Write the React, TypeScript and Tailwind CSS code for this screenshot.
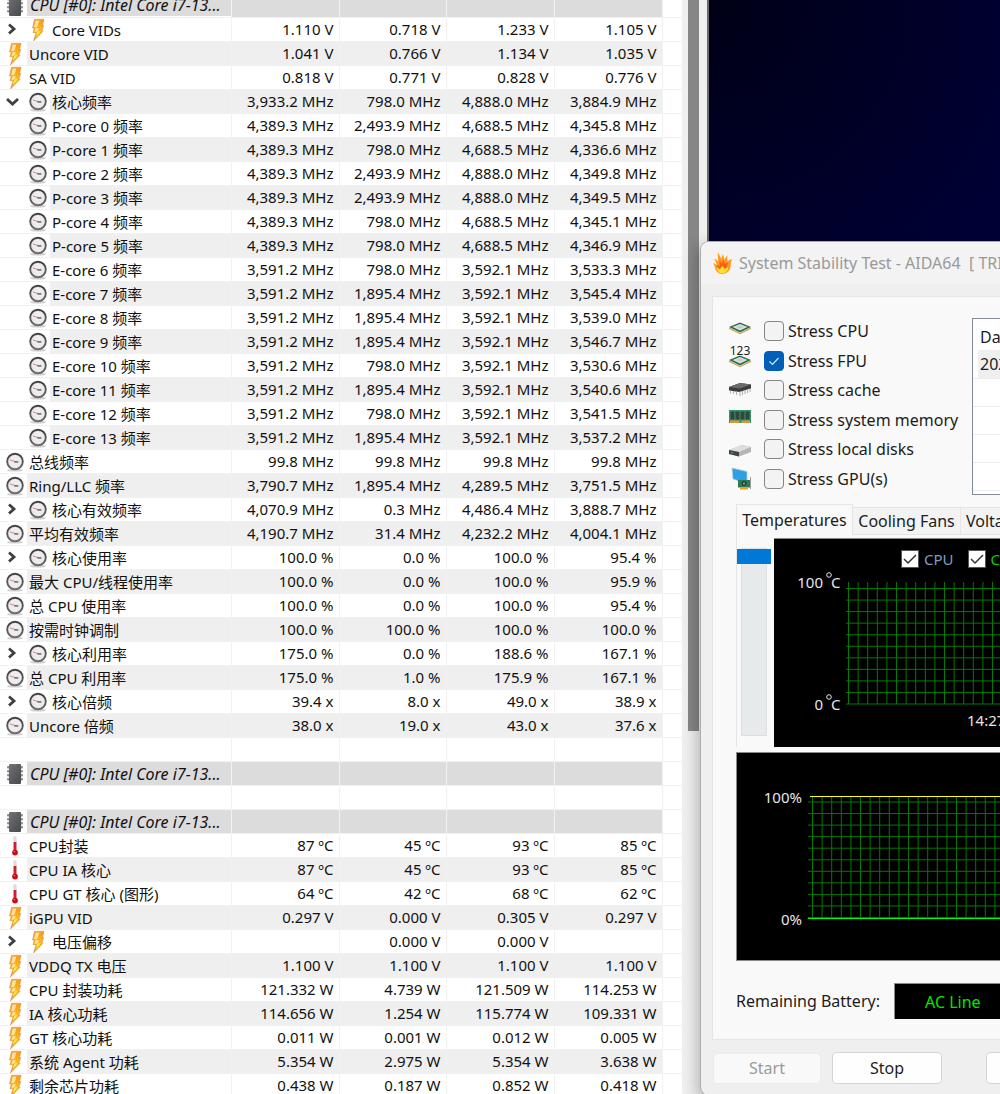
/**
 * Desktop with a hardware sensor list and a stability test window on top.
 * - SensorTable: tree-like list of readings (current / min / max / average)
 * - StabilityWindow: stress options, temperature chart and usage chart
 */

import { useState } from "react";

type IconKind = "chip" | "bolt" | "clock" | "temp";

interface SensorRow {
    label: string;
    icon?: IconKind;
    values?: string[];
    header?: boolean;
    child?: boolean;
    toggle?: "open" | "closed";
}

/* ── Sensor data ──────────────────────────────────────── */
const core = (label: string, values: string[]): SensorRow => ({
    label,
    icon: "clock",
    child: true,
    values: values.map((v) => `${v} MHz`),
});

const CPU_HEADER: SensorRow = { label: "CPU [#0]: Intel Core i7-13...", icon: "chip", header: true };

const ROWS: SensorRow[] = [
    CPU_HEADER,
    { label: "Core VIDs", icon: "bolt", child: true, toggle: "closed", values: ["1.110 V", "0.718 V", "1.233 V", "1.105 V"] },
    { label: "Uncore VID", icon: "bolt", values: ["1.041 V", "0.766 V", "1.134 V", "1.035 V"] },
    { label: "SA VID", icon: "bolt", values: ["0.818 V", "0.771 V", "0.828 V", "0.776 V"] },
    { ...core("核心频率", ["3,933.2", "798.0", "4,888.0", "3,884.9"]), toggle: "open" },
    core("P-core 0 频率", ["4,389.3", "2,493.9", "4,688.5", "4,345.8"]),
    core("P-core 1 频率", ["4,389.3", "798.0", "4,688.5", "4,336.6"]),
    core("P-core 2 频率", ["4,389.3", "2,493.9", "4,888.0", "4,349.8"]),
    core("P-core 3 频率", ["4,389.3", "2,493.9", "4,888.0", "4,349.5"]),
    core("P-core 4 频率", ["4,389.3", "798.0", "4,688.5", "4,345.1"]),
    core("P-core 5 频率", ["4,389.3", "798.0", "4,688.5", "4,346.9"]),
    core("E-core 6 频率", ["3,591.2", "798.0", "3,592.1", "3,533.3"]),
    core("E-core 7 频率", ["3,591.2", "1,895.4", "3,592.1", "3,545.4"]),
    core("E-core 8 频率", ["3,591.2", "1,895.4", "3,592.1", "3,539.0"]),
    core("E-core 9 频率", ["3,591.2", "1,895.4", "3,592.1", "3,546.7"]),
    core("E-core 10 频率", ["3,591.2", "798.0", "3,592.1", "3,530.6"]),
    core("E-core 11 频率", ["3,591.2", "1,895.4", "3,592.1", "3,540.6"]),
    core("E-core 12 频率", ["3,591.2", "798.0", "3,592.1", "3,541.5"]),
    core("E-core 13 频率", ["3,591.2", "1,895.4", "3,592.1", "3,537.2"]),
    { label: "总线频率", icon: "clock", values: ["99.8 MHz", "99.8 MHz", "99.8 MHz", "99.8 MHz"] },
    { label: "Ring/LLC 频率", icon: "clock", values: ["3,790.7 MHz", "1,895.4 MHz", "4,289.5 MHz", "3,751.5 MHz"] },
    { ...core("核心有效频率", ["4,070.9", "0.3", "4,486.4", "3,888.7"]), toggle: "closed" },
    { label: "平均有效频率", icon: "clock", values: ["4,190.7 MHz", "31.4 MHz", "4,232.2 MHz", "4,004.1 MHz"] },
    { label: "核心使用率", icon: "clock", child: true, toggle: "closed", values: ["100.0 %", "0.0 %", "100.0 %", "95.4 %"] },
    { label: "最大 CPU/线程使用率", icon: "clock", values: ["100.0 %", "0.0 %", "100.0 %", "95.9 %"] },
    { label: "总 CPU 使用率", icon: "clock", values: ["100.0 %", "0.0 %", "100.0 %", "95.4 %"] },
    { label: "按需时钟调制", icon: "clock", values: ["100.0 %", "100.0 %", "100.0 %", "100.0 %"] },
    { label: "核心利用率", icon: "clock", child: true, toggle: "closed", values: ["175.0 %", "0.0 %", "188.6 %", "167.1 %"] },
    { label: "总 CPU 利用率", icon: "clock", values: ["175.0 %", "1.0 %", "175.9 %", "167.1 %"] },
    { label: "核心倍频", icon: "clock", child: true, toggle: "closed", values: ["39.4 x", "8.0 x", "49.0 x", "38.9 x"] },
    { label: "Uncore 倍频", icon: "clock", values: ["38.0 x", "19.0 x", "43.0 x", "37.6 x"] },
    { label: "" },
    CPU_HEADER,
    { label: "" },
    CPU_HEADER,
    { label: "CPU封装", icon: "temp", values: ["87 ºC", "45 ºC", "93 ºC", "85 ºC"] },
    { label: "CPU IA 核心", icon: "temp", values: ["87 ºC", "45 ºC", "93 ºC", "85 ºC"] },
    { label: "CPU GT 核心 (图形)", icon: "temp", values: ["64 ºC", "42 ºC", "68 ºC", "62 ºC"] },
    { label: "iGPU VID", icon: "bolt", values: ["0.297 V", "0.000 V", "0.305 V", "0.297 V"] },
    { label: "电压偏移", icon: "bolt", child: true, toggle: "closed", values: ["", "0.000 V", "0.000 V", ""] },
    { label: "VDDQ TX 电压", icon: "bolt", values: ["1.100 V", "1.100 V", "1.100 V", "1.100 V"] },
    { label: "CPU 封装功耗", icon: "bolt", values: ["121.332 W", "4.739 W", "121.509 W", "114.253 W"] },
    { label: "IA 核心功耗", icon: "bolt", values: ["114.656 W", "1.254 W", "115.774 W", "109.331 W"] },
    { label: "GT 核心功耗", icon: "bolt", values: ["0.011 W", "0.001 W", "0.012 W", "0.005 W"] },
    { label: "系统 Agent 功耗", icon: "bolt", values: ["5.354 W", "2.975 W", "5.354 W", "3.638 W"] },
    { label: "剩余芯片功耗", icon: "bolt", values: ["0.438 W", "0.187 W", "0.852 W", "0.418 W"] },
];

/* ── Sensor icons ─────────────────────────────────────── */
function SensorIcon({ kind }: { kind: IconKind }) {
    switch (kind) {
        case "chip":
            return (
                <svg width="18" height="22" viewBox="0 0 18 22">
                    {[3, 7, 11, 15].map((y) => (
                        <rect key={y} x="1" y={y} width="16" height="2.4" rx="1" fill="#8f8f8f" />
                    ))}
                    <rect x="3" y="1" width="12" height="20" rx="1" fill="url(#chipFill)" />
                    <path d="M7.5 1h3a1.5 1.5 0 0 1-3 0z" fill="#77797c" />
                </svg>
            );
        case "bolt":
            return (
                <svg width="16" height="24" viewBox="0 0 16 24">
                    <path d="M4.6 1.4H14l-1.600 6.200h1.200L11.700 13.400h1.200L3.600 22.800l2.600-8.200H3l1.500-4.600H2.600z" fill="url(#boltFill)" stroke="#d48f4c" strokeWidth=".7" />
                    <path d="M5.600 2.600h3.800L7.400 9 4 9.400z" fill="#ffdf9a" />
                    <path d="M5.600 10.500l3-.6-1 3.400-3 .4z" fill="#ffe79a" />
                    <path d="M7.600 13.600l3.200-.6-5 5.800z" fill="#fff03a" />
                </svg>
            );
        case "clock":
            return (
                <svg width="20" height="20" viewBox="0 0 20 20">
                    <ellipse cx="10" cy="18.200" rx="8" ry="1.400" fill="#cfcfcf" />
                    <circle cx="10" cy="9.500" r="7.800" fill="#ededed" stroke="url(#clockRim)" strokeWidth="1.900" />
                    <circle cx="10" cy="9.500" r="6.200" fill="none" stroke="#c4c4c4" strokeWidth=".9" strokeDasharray=".8 2.500" />
                    <path d="M5 7.900l5.400 1.800" stroke="#c98c80" strokeWidth="1" />
                    <path d="M9.400 9.900h4" stroke="#6a6260" strokeWidth="1.500" />
                </svg>
            );
        case "temp":
            return (
                <svg width="8" height="22" viewBox="0 0 8 22">
                    <rect x="2.4" y="1" width="3.2" height="16" rx="1.6" fill="#dcdcdc" />
                    <rect x="2.6" y="7" width="2.8" height="10" fill="#cf1f28" />
                    <circle cx="4" cy="17.6" r="2.9" fill="#c90f1c" />
                    <circle cx="3.2" cy="16.8" r=".8" fill="#f0757a" />
                </svg>
            );
    }
}

function IconDefs() {
    return (
        <svg width="0" height="0" className="absolute">
            <defs>
                <linearGradient id="chipFill" x1="0" y1="0" x2="1" y2="1">
                    <stop offset="0" stopColor="#6f7174" />
                    <stop offset="1" stopColor="#47494c" />
                </linearGradient>
                <linearGradient id="boltFill" x1="0" y1="0" x2="0" y2="1">
                    <stop offset="0" stopColor="#f79a1c" />
                    <stop offset=".65" stopColor="#fdc21e" />
                    <stop offset="1" stopColor="#e39a4e" />
                </linearGradient>
                <linearGradient id="clockRim" x1="0" y1="0" x2="0" y2="1">
                    <stop offset="0" stopColor="#3f3f3f" />
                    <stop offset="1" stopColor="#6e6e6e" />
                </linearGradient>
            </defs>
        </svg>
    );
}

function Toggle({ state, label }: { state: "open" | "closed"; label: string }) {
    return (
        <button type="button" aria-label={label} aria-expanded={state === "open"} className="flex h-full w-full items-center justify-center">
            <svg width="14" height="14" viewBox="0 0 14 14" fill="none" stroke="#404040" strokeWidth="2.800">
                {state === "open" ? <path d="M2 5l5.500 5L13 5" /> : <path d="M4 2.500L9 7l-5 4.500" />}
            </svg>
        </button>
    );
}

function SensorTable() {
    return (
        <table className="-mt-[7px] w-[682px] shrink-0 table-fixed border-collapse bg-white text-[15px] leading-[22px] text-[#111]">
            <colgroup>
                <col className="w-[231px]" />
                <col className="w-[108px]" />
                <col className="w-[107px]" />
                <col className="w-[108px]" />
                <col className="w-[108px]" />
                <col />
            </colgroup>
            <tbody>
                {ROWS.map((row, i) => {
                    const fill = row.header ? "bg-[#dcdcdc]" : i % 2 === 0 && row.label ? "bg-[#efefef]" : "bg-white";
                    return (
                        <tr key={i} className="h-6">
                            <td className="border-r border-b border-[#f1f1f1] p-0">
                                <div className="flex h-[23px] items-stretch">
                                    {row.child && (
                                        <span className="w-[23px] shrink-0">
                                            {row.toggle && <Toggle state={row.toggle} label={row.label} />}
                                        </span>
                                    )}
                                    <span className="flex w-[27px] shrink-0 items-center justify-center pt-[2px] pl-[3px]">
                                        {row.icon && <SensorIcon kind={row.icon} />}
                                    </span>
                                    <span className={`flex-1 pt-px whitespace-nowrap ${fill} ${row.header ? "pl-[3px] text-[16px] italic" : "pl-[2px]"}`}>{row.label}</span>
                                </div>
                            </td>
                            {[0, 1, 2, 3].map((c) => (
                                <td key={c} className={`border-r border-b border-[#f1f1f1] py-0 pr-[5px] pl-0 text-right whitespace-nowrap ${fill}`}>
                                    {row.values?.[c]}
                                </td>
                            ))}
                            <td className="border-b border-[#f1f1f1] p-0" />
                        </tr>
                    );
                })}
            </tbody>
        </table>
    );
}

/* ── Stability window icons ───────────────────────────── */
function FlameIcon() {
    return (
        <svg width="20" height="24" viewBox="0 0 20 24" className="shrink-0">
            <path d="M5 1c1 3 2.600 4.500 3.200 7C8.800 6 9.200 4.500 9.800 3.200c1 2 1.500 4 1.600 5.800.8-1.600 1.500-3.500 3-4.600-.3 2.600-.2 4.300.2 6 1-1 2.600-2 4.600-2.200-1.400 2-1.300 4-1.500 6.600C17.300 19.500 14 23 9.600 23 5 23 2.400 20 2 16.500 1.700 14.700.8 13.400 0 12.400c1.600 0 2.900.6 4 1.600C3.200 11.500 2 9.600 1.400 7.400 3 8.200 4.400 9.400 5.200 11 5.400 7.600 4.400 4 5 1z" fill="#ff9a1f" />
            <path d="M6.500 9c1 1.600 1.700 3 2 4.600.6-2 1.200-3.500 2.500-5.200.2 2 .2 3.400.8 5 .9-1 2-1.800 3.400-2-1.200 3.200-.7 5-3 6.600H6.500C4.800 16.500 4.200 15 3.400 14c1.500 0 2.300.5 3.300 1.300C6.900 13.200 6.300 11 6.500 9z" fill="#ff5a1a" />
            <path d="M3.600 17.500c1.400-.4 2.300.1 3.200 1 .8-1.600 1.600-2.600 3-3.500.6 1.200 1.200 2 1.600 3.100 1-1 2.400-1.600 4-1.600-.8 3.600-3 5.800-6 5.800-2.800 0-5-1.800-5.800-4.800z" fill="#ffe02a" />
        </svg>
    );
}

function Board({ y }: { y: number }) {
    return (
        <g transform={`translate(0 ${y})`}>
            <path d="M1 5.500l11 5.500 11-5.500v1.500L12 12.200 1 7z" fill="#c9a35a" />
            <path d="M1 5L12 .5 23 5 12 10.500z" fill="#2c6b4a" />
            <path d="M4.500 5L12 1.900 19.500 5 12 8.600z" fill="#dfe3e0" />
            <path d="M8 5l4-1.600 4 1.600-4 1.800z" fill="#c7ccc9" />
        </g>
    );
}

const STRESS_ICONS = {
    cpu: (
        <svg width="24" height="24" viewBox="0 0 24 24">
            <Board y={3} />
        </svg>
    ),
    fpu: (
        <svg width="24" height="24" viewBox="0 0 24 24" className="overflow-visible">
            <text x="12" y="6" textAnchor="middle" fontSize="12" fill="#222">
                123
            </text>
            <Board y={6} />
        </svg>
    ),
    cache: (
        <svg width="24" height="24" viewBox="0 0 24 24">
            <path d="M1 9l11-4 11 1.500v4L11 14 1 12.500z" fill="#3d3d3d" />
            <path d="M1 9l11-4 11 1.500L11.500 10.500z" fill="#6c6c6c" />
            <path d="M2.500 12.500v3M5.500 13v3M8.500 13.500v3.500M12 14v4M14.500 13v4M17 12v4M19.500 11v4M22 10.500v3.500" stroke="#b5b5b5" strokeWidth="1.1" />
        </svg>
    ),
    memory: (
        <svg width="24" height="24" viewBox="0 0 24 24">
            <path d="M1 2h22v13H1z" fill="#35936a" />
            <path d="M2.500 3.500h4v8h-4zM7.500 3.500h4v8h-4zM12.500 3.500h4v8h-4zM17.500 3.500h4v8h-4z" fill="#30463f" />
            <path d="M2 12.500h9.500V15H2zM13.500 12.500H22V15h-8.500z" fill="#d5983a" />
        </svg>
    ),
    disk: (
        <svg width="24" height="24" viewBox="0 0 24 24">
            <path d="M1 13l13-5 9 2v5L11 19.500 1 17z" fill="#b4b4b4" />
            <path d="M1 13l13-5 9 2-12 5z" fill="#dedede" />
            <path d="M1 13l10 2v4.500L1 17z" fill="#424242" />
            <path d="M3 15l2.500.5v1L3 16z" fill="#41b36a" />
        </svg>
    ),
    gpu: (
        <svg width="24" height="24" viewBox="0 0 24 24">
            <path d="M4 1l15 3.500v12L5 12z" fill="#2f9fe6" stroke="#b5cad8" strokeWidth=".8" />
            <path d="M10 14h4v3l-3 1z" fill="#8a8a8a" />
            <path d="M10 13h12v7.500H10z" fill="#2d7a52" />
            <circle cx="16" cy="16.500" r="2.400" fill="#1f3f35" />
            <circle cx="16" cy="16.500" r=".9" fill="#9fd0b8" />
            <path d="M22.500 10v12" stroke="#9a9a9a" />
            <path d="M12 20.500h8v2h-8z" fill="#e9a321" />
        </svg>
    ),
};

const STRESS_OPTIONS: { id: keyof typeof STRESS_ICONS; label: string }[] = [
    { id: "cpu", label: "Stress CPU" },
    { id: "fpu", label: "Stress FPU" },
    { id: "cache", label: "Stress cache" },
    { id: "memory", label: "Stress system memory" },
    { id: "disk", label: "Stress local disks" },
    { id: "gpu", label: "Stress GPU(s)" },
];

function StressOptions() {
    const [checked, setChecked] = useState<string[]>(["fpu"]);

    const toggle = (id: string) =>
        setChecked((prev) => (prev.includes(id) ? prev.filter((x) => x !== id) : [...prev, id]));

    return (
        <div className="mt-[3px] flex h-[168px] w-[244px] shrink-0 flex-col justify-between">
            {STRESS_OPTIONS.map(({ id, label }) => (
                <div key={id} className="flex h-5 items-center">
                    <span className="-my-[2px] h-6 w-9 shrink-0">{STRESS_ICONS[id]}</span>
                    <span className="relative h-5 w-5 shrink-0">
                        <input
                            id={`stress-${id}`}
                            type="checkbox"
                            checked={checked.includes(id)}
                            onChange={() => toggle(id)}
                            className="block h-5 w-5 appearance-none rounded border border-[#868686] bg-[#f3f3f3] checked:border-[#005fb8] checked:bg-[#005fb8]"
                        />
                        {checked.includes(id) && (
                            <svg className="pointer-events-none absolute inset-0" width="20" height="20" viewBox="0 0 20 20" fill="none" stroke="#d8e8f8" strokeWidth="1.2">
                                <path d="M5.500 10.500l3 3 6-6.500" />
                            </svg>
                        )}
                    </span>
                    <label htmlFor={`stress-${id}`} className="pl-1 whitespace-nowrap">
                        {label}
                    </label>
                </div>
            ))}
        </div>
    );
}

/* ── Charts ───────────────────────────────────────────── */
const STEPS_X = Array.from({ length: 60 }, (_, i) => i);
const STEPS_Y = Array.from({ length: 11 }, (_, i) => i);

function Grid({ x, y, top, left }: { x: number; y: number; top: number; left: number }) {
    const bottom = y + 10 * 11.55;
    return (
        <g stroke="#007a00" strokeWidth="1">
            {STEPS_X.map((i) => (
                <line key={`x${i}`} x1={x + i * 9.6} x2={x + i * 9.6} y1={top} y2={bottom} />
            ))}
            {STEPS_Y.map((i) => (
                <line key={`y${i}`} x1={left} x2={700} y1={y + i * 11.55} y2={y + i * 11.55} />
            ))}
        </g>
    );
}

function LegendItem({ id, label, color }: { id: string; label: string; color: string }) {
    return (
        <span className="flex items-center">
            <span className="relative h-[18px] w-[18px]">
                <input id={id} type="checkbox" defaultChecked className="block h-[18px] w-[18px] appearance-none border border-[#555] bg-white" />
                <svg className="pointer-events-none absolute inset-0" width="18" height="18" viewBox="0 0 18 18" fill="none" stroke="#333" strokeWidth="1.500">
                    <path d="M3 9l4 4 8-8" />
                </svg>
            </span>
            <label htmlFor={id} className={`pl-[5px] text-[15px] leading-[18px] whitespace-nowrap ${color}`}>
                {label}
            </label>
        </span>
    );
}

function TemperatureChart() {
    return (
        <div className="min-w-0 flex-1 overflow-hidden border-t border-[#8a8a8a] bg-black pt-[11px]">
            <div className="flex gap-[14px] pl-[127px]">
                <LegendItem id="legend-cpu" label="CPU" color="text-[#7f9cc4]" />
                <LegendItem id="legend-core" label="CPU Core #1" color="text-[#00d000]" />
            </div>
            <svg width="100%" height="179" className="block" fill="#e6e6e6" fontSize="15">
                <Grid x={74.5} y={20.5} top={14} left={72} />
                <text x="49" y="20" textAnchor="end">
                    100
                </text>
                <text x="49" y="142" textAnchor="end">
                    0
                </text>
                <text x="57" y="20">
                    C
                </text>
                <text x="57" y="142">
                    C
                </text>
                <circle cx="55" cy="7" r="2.300" fill="none" stroke="#e6e6e6" />
                <circle cx="55" cy="129" r="2.300" fill="none" stroke="#e6e6e6" />
                <text x="193" y="158">
                    14:27:35
                </text>
            </svg>
        </div>
    );
}

function UsageChart() {
    return (
        <div className="overflow-hidden border border-r-0 border-[#8a8a8a] bg-black">
            <svg width="100%" height="207" className="block" fill="#e6e6e6" fontSize="15">
                <Grid x={75.5} y={49} top={43} left={71} />
                <line x1="73" x2="700" y1="43.500" y2="43.500" stroke="#ffff00" />
                <line x1="71" x2="700" y1="165.500" y2="165.500" stroke="#00ff00" />
                <text x="65" y="50" textAnchor="end">
                    100%
                </text>
                <text x="65" y="172" textAnchor="end">
                    0%
                </text>
            </svg>
        </div>
    );
}

/* ── Stability test window ────────────────────────────── */
function StabilityWindow() {
    return (
        <section className="absolute top-[241px] right-0 left-[700px] flex flex-col overflow-hidden rounded-l-[9px] border border-r-0 border-[#adadad] bg-[#efefef] text-[16px] leading-5 text-[#1c1c1c] shadow-[-4px_4px_14px_rgba(0,0,0,0.22)]">
            <header className="flex h-[42px] items-center gap-[6px] bg-[#f3f3f3] pl-3">
                <FlameIcon />
                <h1 className="whitespace-pre text-[#999]">System Stability Test - AIDA64  [ TRIAL VERSION ]</h1>
            </header>

            <main className="mt-3 ml-[11px] border border-r-0 border-[#e5e5e5] bg-[#f9f9f9] pt-[21px] pb-5">
                <div className="flex items-start pl-[15px]">
                    <StressOptions />
                    <table className="h-[177px] min-w-[320px] border-separate border-spacing-0 border border-[#858b96] bg-white">
                        <thead>
                            <tr className="h-[31px]">
                                <th className="pt-1 pr-0 pb-0 pl-[7px] text-left font-normal whitespace-nowrap">Date &amp; Time</th>
                            </tr>
                        </thead>
                        <tbody>
                            <tr className="h-7">
                                <td className="border-b border-[#ececec] py-0 pr-0 pl-[5px]">
                                    <span className="block bg-[#efefef] py-1 pl-[2px] whitespace-nowrap">2023/1/15 14:27:35</span>
                                </td>
                            </tr>
                            {[0, 1, 2, 3].map((n) => (
                                <tr key={n} className="h-7">
                                    <td className="border-b border-[#ececec] p-0" />
                                </tr>
                            ))}
                            <tr>
                                <td className="p-0" />
                            </tr>
                        </tbody>
                    </table>
                </div>

                <div className="mt-[9px] pl-[23px]">
                    <div role="tablist" className="flex items-end">
                        <button type="button" role="tab" aria-selected="true" className="h-[31px] w-[117px] shrink-0 border border-b-0 border-[#e5e5e5] bg-[#f9f9f9] whitespace-nowrap">
                            Temperatures
                        </button>
                        <button type="button" role="tab" aria-selected="false" className="h-7 w-[108px] shrink-0 border border-l-0 border-[#e5e5e5] bg-[#f3f3f3] whitespace-nowrap">
                            Cooling Fans
                        </button>
                        <button type="button" role="tab" aria-selected="false" className="h-7 shrink-0 border border-l-0 border-[#e5e5e5] bg-[#f3f3f3] px-[5px] whitespace-nowrap">
                            Voltages
                        </button>
                    </div>
                    <div className="flex border-l border-[#e5e5e5] pt-[3px]">
                        <div className="w-[37px] shrink-0 pt-[10px]">
                            <input
                                type="range"
                                aria-label="Sensor scroll"
                                min={0}
                                max={100}
                                defaultValue={0}
                                className="block h-[188px] w-[34px] appearance-none bg-transparent [writing-mode:vertical-lr] [&::-webkit-slider-runnable-track]:w-[26px] [&::-webkit-slider-runnable-track]:border [&::-webkit-slider-runnable-track]:border-[#dcdfe0] [&::-webkit-slider-runnable-track]:bg-[#e6eaeb] [&::-webkit-slider-thumb]:-ml-[5px] [&::-webkit-slider-thumb]:h-[15px] [&::-webkit-slider-thumb]:w-[34px] [&::-webkit-slider-thumb]:appearance-none [&::-webkit-slider-thumb]:bg-[#0078d7]"
                            />
                        </div>
                        <TemperatureChart />
                    </div>
                    <div className="mt-[5px]">
                        <UsageChart />
                    </div>
                    <div className="mt-[22px] flex items-center">
                        <span className="w-[158px] shrink-0 whitespace-nowrap">Remaining Battery:</span>
                        <output className="flex h-9 min-w-[118px] flex-1 items-center border-t border-l border-[#8a8a8a] bg-black pl-[30px] whitespace-nowrap text-[#00e600]">AC Line</output>
                    </div>
                </div>
            </main>

            <footer className="flex items-center pt-3 pb-[11px] pl-3">
                <button type="button" disabled className="h-[31px] w-[108px] shrink-0 rounded border border-[#ececec] bg-[#f9f9f9] text-[#9a9a9a]">
                    Start
                </button>
                <button type="button" className="ml-[11px] h-8 w-[110px] shrink-0 rounded border border-[#d4d4d4] bg-[#fefefe]">
                    Stop
                </button>
                <button type="button" className="ml-11 h-8 w-[110px] shrink-0 rounded border border-[#d4d4d4] bg-[#fefefe]">
                    Clear
                </button>
            </footer>
        </section>
    );
}

export default function App() {
    return (
        <div className="relative flex h-screen overflow-hidden bg-[#f0f0f0] font-['Noto_Sans','Noto_Sans_CJK_SC',sans-serif]">
            <IconDefs />
            <SensorTable />
            <div className="w-[25px] shrink-0 bg-[#efefef] pl-[6px]">
                <div className="h-[731px] w-[11px] bg-[#868686]" />
            </div>
            <div className="min-w-0 flex-1 border-l-2 border-[#6b6b6b] bg-[radial-gradient(circle_at_0_0,#000016,#000034_340px)]" />
            <StabilityWindow />
        </div>
    );
}
